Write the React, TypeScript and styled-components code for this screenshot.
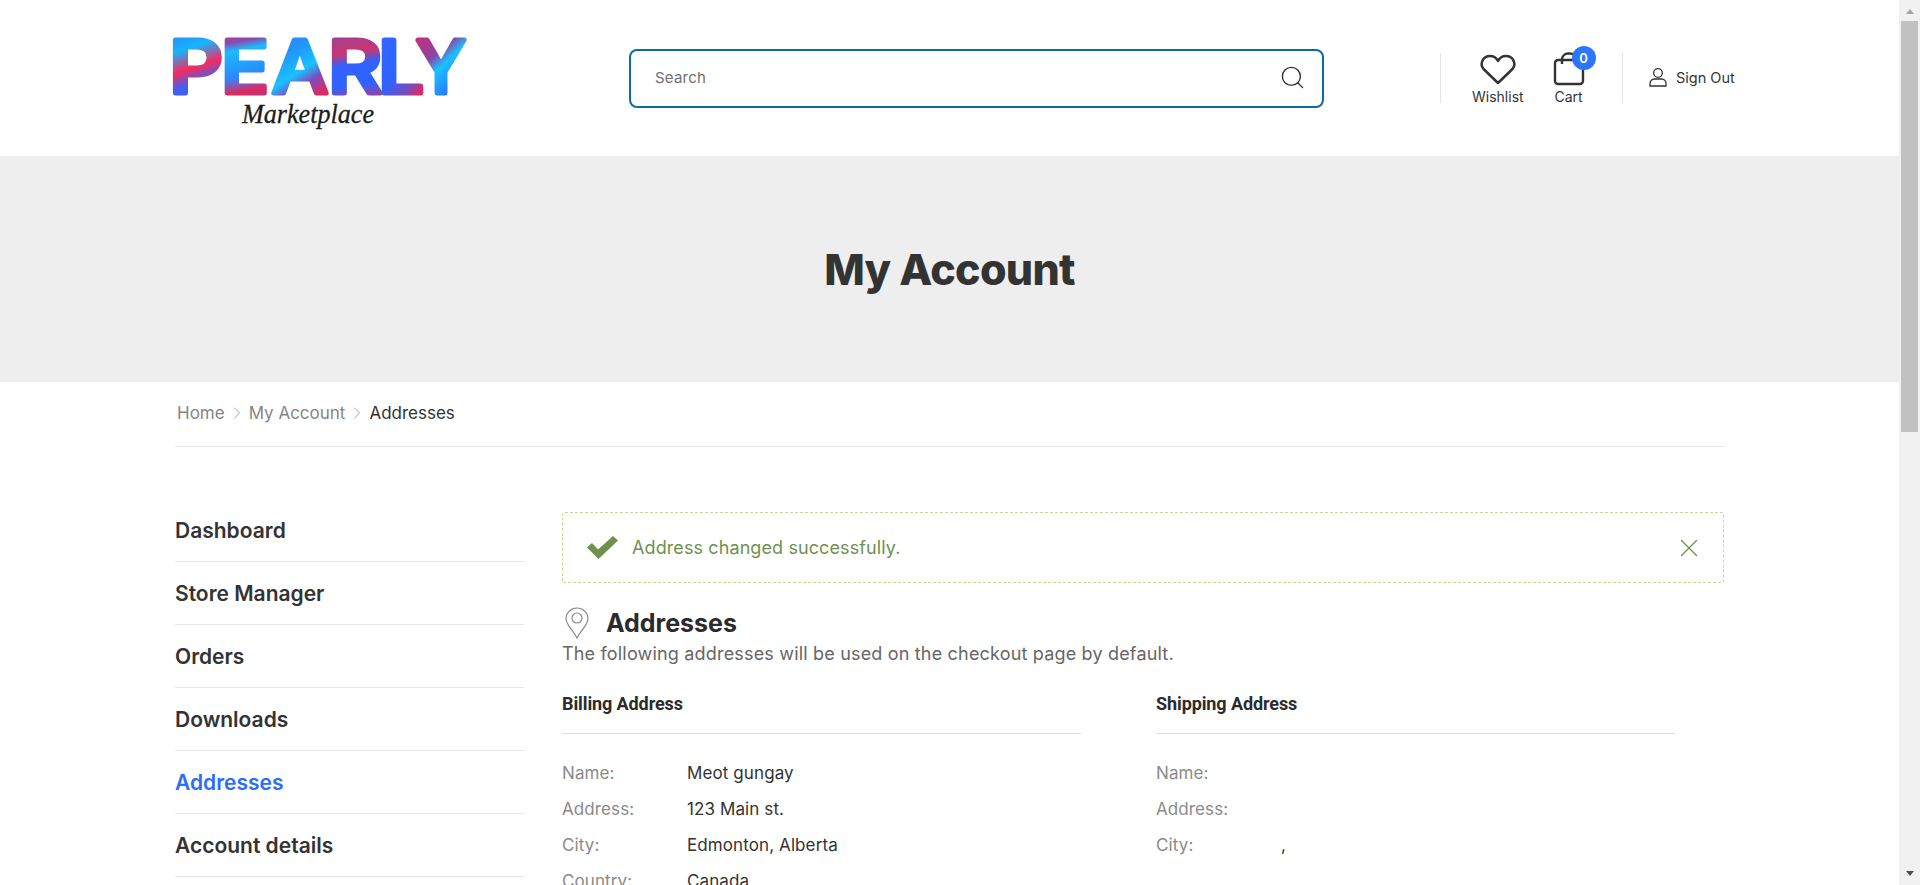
import React from 'react';
import styled, { createGlobalStyle } from 'styled-components';
import { Search, X, ChevronRight } from 'lucide-react';

const GlobalStyle = createGlobalStyle`
  html, body { margin: 0; padding: 0; height: 885px; overflow: hidden; background: #fff; }
  * { box-sizing: border-box; }
  body { font-family: "Inter", "Noto Sans", sans-serif; color: #333; }
`;

const Viewport = styled.div`
  display: flex;
  width: 1920px;
  height: 885px;
  overflow: hidden;
`;

const Page = styled.div`
  width: 1899px;
  flex: none;
`;

const ScrollTrack = styled.div`
  width: 21px;
  flex: none;
  background: #f1f1f1;
  display: flex;
  flex-direction: column;
  align-items: center;
  justify-content: space-between;
  position: relative;
`;

const ScrollThumb = styled.div`
  position: absolute;
  top: 21px;
  left: 2px;
  width: 17px;
  height: 411px;
  background: #c1c1c1;
`;

const ScrollArrow = styled.div<{ $down?: boolean }>`
  width: 0;
  height: 0;
  margin: 9px 0;
  border-left: 4.5px solid transparent;
  border-right: 4.5px solid transparent;
  ${p => (p.$down ? 'border-top: 5px solid #505050;' : 'border-bottom: 5px solid #a3a3a3;')}
`;

const Header = styled.header`
  height: 156px;
  padding-left: 174px;
  display: flex;
  align-items: flex-start;
`;

const LogoBox = styled.div`
  width: 292px;
  height: 100px;
  margin-top: 30px;
  flex: none;
`;

const SearchBox = styled.div`
  width: 695px;
  height: 59px;
  margin: 49px 0 0 163px;
  border: 2px solid #0e6aa5;
  border-radius: 8px;
  display: flex;
  align-items: center;
  justify-content: space-between;
  padding: 0 16px 2px 24px;
  font-size: 15px;
  letter-spacing: 0.2px;
  color: #6f6f6f;
  flex: none;
`;

const HeaderActions = styled.div`
  display: flex;
  margin: 53px 0 0 116px;
  height: 50px;
`;

const ActionGroup = styled.div<{ $last?: boolean }>`
  display: flex;
  border-left: 1px solid #e4e4e4;
  width: ${p => (p.$last ? '130px' : '182px')};
  padding-left: ${p => (p.$last ? '26px' : '31px')};
  gap: 29px;
`;

const ActionItem = styled.div`
  position: relative;
  display: flex;
  flex-direction: column;
  align-items: center;
  font-size: 14px;
  line-height: 20px;
  color: #333;
  height: 54px;
  padding-top: 1px;
`;

const ActionIcon = styled.div`
  height: 33px;
  display: flex;
  justify-content: center;
`;

const CartSvg = styled.svg`
  margin-top: -2px;
`;

const CartBadge = styled.span`
  position: absolute;
  top: -7px;
  right: -11px;
  width: 24px;
  height: 24px;
  border-radius: 50%;
  background: #2c75ff;
  color: #fff;
  font-size: 13px;
  font-weight: 600;
  display: flex;
  align-items: center;
  justify-content: center;
`;

const SignOut = styled.div`
  display: flex;
  align-items: center;
  gap: 9px;
  font-size: 14.5px;
  height: 48px;
  color: #333;
`;

const Hero = styled.section`
  height: 226px;
  background: #eeeeee;
  display: flex;
  align-items: center;
  justify-content: center;
`;

const HeroTitle = styled.h1`
  margin: 0;
  font-size: 43px;
  font-weight: 800;
  color: #333;
  letter-spacing: -0.7px;
`;

const Container = styled.div`
  width: 1549px;
  margin-left: 175px;
`;

const Breadcrumb = styled.nav`
  height: 65px;
  border-bottom: 1px solid #e8e8e8;
  display: flex;
  align-items: center;
  padding: 0 0 2px 2px;
  gap: 2px;
  font-size: 17px;
  color: #858585;
`;

const CrumbCurrent = styled.span`
  color: #333;
`;

const Columns = styled.div`
  display: flex;
  margin-top: 52px;
`;

const Sidebar = styled.ul`
  list-style: none;
  width: 349px;
  flex: none;
  margin: 0 38px 0 0;
  padding: 0;
`;

const SideItem = styled.li<{ $active?: boolean }>`
  height: 63px;
  border-bottom: 1px solid #e8e8e8;
  display: flex;
  align-items: center;
  font-size: 21px;
  font-weight: 600;
  color: ${p => (p.$active ? '#2c6bff' : '#333')};
`;

const Main = styled.main`
  width: 1162px;
  padding-top: 13px;
`;

const Notice = styled.div`
  height: 71px;
  border: 1px dashed #bfdc8f;
  border-radius: 3px;
  display: flex;
  align-items: center;
  padding: 0 19px 0 24px;
  color: #70904f;
  font-size: 18px;
  letter-spacing: 0.1px;
`;

const NoticeText = styled.span`
  margin-left: 14px;
  flex: 1;
`;

const TitleRow = styled.div`
  display: flex;
  align-items: center;
  margin-top: 23px;
  height: 34px;
  padding-left: 3px;
  gap: 17px;
`;

const SectionTitle = styled.h2`
  margin: 0;
  font-size: 25px;
  font-weight: 700;
  color: #2b2b2b;
`;

const Lead = styled.p`
  margin: 1px 0 0;
  font-size: 18px;
  line-height: 26px;
  letter-spacing: 0.18px;
  color: #666;
`;

const AddressGrid = styled.div`
  display: grid;
  grid-template-columns: 519px 519px;
  column-gap: 75px;
  margin-top: 14px;
`;

const AddressTitle = styled.h3`
  margin: 0 0 21px;
  height: 53px;
  display: flex;
  align-items: center;
  border-bottom: 1px solid #dedede;
  padding-bottom: 8px;
  font-family: "Roboto", sans-serif;
  font-size: 18px;
  font-weight: 700;
  letter-spacing: -0.1px;
  color: #2b2b2b;
`;

const Row = styled.div`
  display: flex;
  height: 36px;
  align-items: center;
  font-size: 17px;
  letter-spacing: 0.1px;
`;

const RowLabel = styled.span`
  width: 125px;
  color: #8a8a8a;
`;

const RowValue = styled.span`
  color: #333;
`;

const menu = ['Dashboard', 'Store Manager', 'Orders', 'Downloads', 'Addresses', 'Account details'];

const billing = [
  ['Name:', 'Meot gungay'],
  ['Address:', '123 Main st.'],
  ['City:', 'Edmonton, Alberta'],
  ['Country:', 'Canada'],
];

const shipping = [
  ['Name:', ''],
  ['Address:', ''],
  ['City:', ','],
];

// each letter: x, stretched width, gradient stops
const letters: { c: string; x: number; w: number; x2: number; stops: [number, string][] }[] = [
  { c: 'P', x: -5, w: 54, x2: 0.2, stops: [[0, '#3a6cf5'], [0.35, '#14b5ff'], [0.58, '#f52a5f'], [0.75, '#4460f0'], [1, '#2f62ff']] },
  { c: 'E', x: 47, w: 48, x2: 0.1, stops: [[0, '#d9316c'], [0.25, '#8b48b0'], [0.35, '#18bdfc'], [0.65, '#2d86ff'], [0.82, '#e0285f'], [1, '#8a45a8']] },
  { c: 'A', x: 98, w: 56, x2: 0.4, stops: [[0, '#3b6af0'], [0.45, '#1e9cff'], [0.65, '#19c2ff'], [0.8, '#7b4fc0'], [1, '#e3265f']] },
  { c: 'R', x: 154, w: 54, x2: 0.1, stops: [[0, '#7b4bb8'], [0.38, '#c8356f'], [0.52, '#2f62ff'], [0.75, '#2f62ff'], [1, '#d92c6a']] },
  { c: 'L', x: 204, w: 46, x2: 0.6, stops: [[0, '#3168ff'], [0.6, '#2f62ff'], [0.85, '#7b4bb8'], [1, '#ef2457']] },
  { c: 'Y', x: 242, w: 50, x2: 0.5, stops: [[0, '#e0285f'], [0.45, '#8a45a8'], [0.6, '#19c2ff'], [1, '#2f62ff']] },
];

const Logo = () => (
  <svg width="292" height="100" viewBox="0 0 292 100" overflow="visible">
    <defs>
      {letters.map(l => (
        <linearGradient key={l.c} id={`logo-${l.c}`} x1="0" y1="0" x2={l.x2} y2="1">
          {l.stops.map(([o, col]) => (
            <stop key={o} offset={o} stopColor={col} />
          ))}
        </linearGradient>
      ))}
    </defs>
    {letters.map(l => (
      <text
        key={l.c}
        x={l.x}
        y="63"
        textLength={l.w}
        lengthAdjust="spacingAndGlyphs"
        fontFamily="Inter, sans-serif"
        fontWeight="500"
        fontSize="73"
        fill={`url(#logo-${l.c})`}
        stroke={`url(#logo-${l.c})`}
        strokeWidth="5"
        strokeLinejoin="round"
      >
        {l.c}
      </text>
    ))}
    <text
      x="68"
      y="93"
      textLength="132"
      lengthAdjust="spacingAndGlyphs"
      fontFamily="'Liberation Serif', serif"
      fontStyle="italic"
      fontSize="27"
      fill="#1c1c1c"
      stroke="#1c1c1c"
      strokeWidth="0.3"
    >
      Marketplace
    </text>
  </svg>
);

const HeartIcon = () => (
  <svg width="36" height="31" viewBox="0 0 36 31" fill="none" stroke="#333" strokeWidth="2.5" strokeLinejoin="round">
    <path d="M18 29L3.500 15C-0.500 10.500 2.500 2 10 2C13.500 2 16.500 4 18 7C19.500 4 22.500 2 26 2C33.500 2 36.500 10.500 32.500 15Z" />
  </svg>
);

const CartIcon = () => (
  <CartSvg width="32" height="34" viewBox="0 0 32 34" fill="none" stroke="#333" strokeWidth="2.4">
    <rect x="2" y="8" width="28" height="24" rx="3" />
    <path d="M9 12V7.500a6 6 0 0 1 6-6h2a6 6 0 0 1 6 6V8" />
  </CartSvg>
);

const UserIcon = () => (
  <svg width="18" height="19" viewBox="0 0 18 19" fill="none" stroke="#333" strokeWidth="1.300">
    <circle cx="9" cy="5" r="4.300" />
    <path d="M1 18v-2.500a4.500 4.500 0 0 1 4.500-4.500h7a4.500 4.500 0 0 1 4.500 4.500V18z" />
  </svg>
);

const PinIcon = () => (
  <svg width="24" height="32" viewBox="0 0 24 32" fill="none" stroke="#8a8a8a" strokeWidth="1.200">
    <path d="M12 31C8 23 1 18 1 11.500a11 10.500 0 0 1 22 0C23 18 16 23 12 31z" />
    <circle cx="12" cy="11" r="5" />
  </svg>
);

const App: React.FC = () => (
  <Viewport>
    <GlobalStyle />
    <Page>
      <Header>
        <LogoBox>
          <Logo />
        </LogoBox>
        <SearchBox>
          Search
          <Search size={27} strokeWidth={1.2} color="#2f2f2f" />
        </SearchBox>
        <HeaderActions>
          <ActionGroup>
            <ActionItem>
              <ActionIcon>
                <HeartIcon />
              </ActionIcon>
              Wishlist
            </ActionItem>
            <ActionItem>
              <ActionIcon>
                <CartIcon />
              </ActionIcon>
              Cart
              <CartBadge>0</CartBadge>
            </ActionItem>
          </ActionGroup>
          <ActionGroup $last>
            <SignOut>
              <UserIcon />
              Sign Out
            </SignOut>
          </ActionGroup>
        </HeaderActions>
      </Header>
      <Hero>
        <HeroTitle>My Account</HeroTitle>
      </Hero>
      <Container>
        <Breadcrumb>
          Home
          <ChevronRight size={20} strokeWidth={1.1} color="#9a9a9a" />
          My Account
          <ChevronRight size={20} strokeWidth={1.1} color="#9a9a9a" />
          <CrumbCurrent>Addresses</CrumbCurrent>
        </Breadcrumb>
        <Columns>
          <Sidebar>
            {menu.map(m => (
              <SideItem key={m} $active={m === 'Addresses'}>{m}</SideItem>
            ))}
          </Sidebar>
          <Main>
            <Notice>
              <svg width="31" height="23" viewBox="0 0 31 23">
                <path d="M0 11.500L5 7l6 6.500L26 0l5 4.500L11.500 23z" fill="#70904f" />
              </svg>
              <NoticeText>Address changed successfully.</NoticeText>
              <X size={30} strokeWidth={1.1} color="#70904f" />
            </Notice>
            <TitleRow>
              <PinIcon />
              <SectionTitle>Addresses</SectionTitle>
            </TitleRow>
            <Lead>The following addresses will be used on the checkout page by default.</Lead>
            <AddressGrid>
              <div>
                <AddressTitle>Billing Address</AddressTitle>
                {billing.map(([k, v]) => (
                  <Row key={k}>
                    <RowLabel>{k}</RowLabel>
                    <RowValue>{v}</RowValue>
                  </Row>
                ))}
              </div>
              <div>
                <AddressTitle>Shipping Address</AddressTitle>
                {shipping.map(([k, v]) => (
                  <Row key={k}>
                    <RowLabel>{k}</RowLabel>
                    <RowValue>{v}</RowValue>
                  </Row>
                ))}
              </div>
            </AddressGrid>
          </Main>
        </Columns>
      </Container>
    </Page>
    <ScrollTrack>
      <ScrollArrow />
      <ScrollThumb />
      <ScrollArrow $down />
    </ScrollTrack>
  </Viewport>
);

export default App;
